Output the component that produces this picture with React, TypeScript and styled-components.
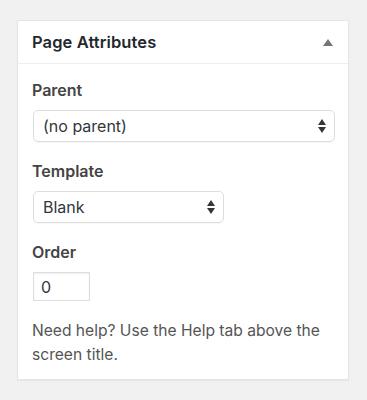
import React from "react";
import styled, { createGlobalStyle } from "styled-components";

const Global = createGlobalStyle`
  html, body { margin: 0; padding: 0; background: #f1f1f1; }
  body { font-family: Inter, "Noto Sans", "Liberation Sans", sans-serif; color: #444; }
  * { box-sizing: border-box; }
`;

const Page = styled.div`
  padding: 20px 18px 22px 17px;
`;

const Panel = styled.section`
  width: 332px;
  background: #fff;
  border: 1px solid #e5e5e5;
  box-shadow: 0 1px 1px rgba(0, 0, 0, 0.04);
`;

const Header = styled.header`
  height: 43px;
  display: flex;
  align-items: center;
  justify-content: space-between;
  padding: 0 15px 0 14px;
  border-bottom: 1px solid #eee;
`;

const Title = styled.h2`
  margin: 0;
  font-size: 16.5px;
  font-weight: 600;
  color: #23282d;
  letter-spacing: 0.1px;
`;

const Toggle = styled.svg`
  width: 10px;
  height: 7px;
  display: block;
`;

const Body = styled.div`
  padding: 15px 12px 12px 14px;
  display: flex;
  flex-direction: column;
`;

const Label = styled.div<{ $top: number }>`
  margin-top: ${(p) => p.$top}px;
  font-size: 16px;
  font-weight: 600;
  line-height: 22px;
  color: #444;
`;

const SelectBox = styled.div<{ $width: string }>`
  margin: 9px 1px 0;
  width: ${(p) => p.$width};
  height: 32px;
  border: 1px solid #ddd;
  border-radius: 5px;
  display: flex;
  align-items: center;
  justify-content: space-between;
  padding: 0 8px 0 9px;
  font-size: 16px;
  color: #32373c;
  box-shadow: 0 1px 1px rgba(0, 0, 0, 0.03);
`;

const Arrows = styled.svg`
  width: 8px;
  height: 14px;
  display: block;
`;

const NumberBox = styled.div`
  margin: 9px 1px 0;
  width: 57px;
  height: 29px;
  border: 1px solid #ddd;
  box-shadow: inset 0 1px 2px rgba(0, 0, 0, 0.07);
  display: flex;
  align-items: center;
  padding-left: 7px;
  font-size: 16px;
  color: #32373c;
`;

const Help = styled.p`
  margin: 18px 0 0;
  font-size: 15.6px;
  line-height: 24px;
  color: #555;
`;

const UpDown = () => (
  <Arrows viewBox="0 0 8 14">
    <path d="M4 0 L8 6 L0 6 Z" fill="#32373c" />
    <path d="M0 8 L8 8 L4 14 Z" fill="#32373c" />
  </Arrows>
);

export default function App() {
  return (
    <>
      <Global />
      <Page>
        <Panel>
          <Header>
            <Title>Page Attributes</Title>
            <Toggle viewBox="0 0 10 7">
              <path d="M5 0 L10 7 L0 7 Z" fill="#72777c" />
            </Toggle>
          </Header>
          <Body>
            <Label $top={0}>Parent</Label>
            <SelectBox $width="auto">
              <span>(no parent)</span>
              <UpDown />
            </SelectBox>
            <Label $top={18}>Template</Label>
            <SelectBox $width="191px">
              <span>Blank</span>
              <UpDown />
            </SelectBox>
            <Label $top={18}>Order</Label>
            <NumberBox>0</NumberBox>
            <Help>Need help? Use the Help tab above the screen title.</Help>
          </Body>
        </Panel>
      </Page>
    </>
  );
}
